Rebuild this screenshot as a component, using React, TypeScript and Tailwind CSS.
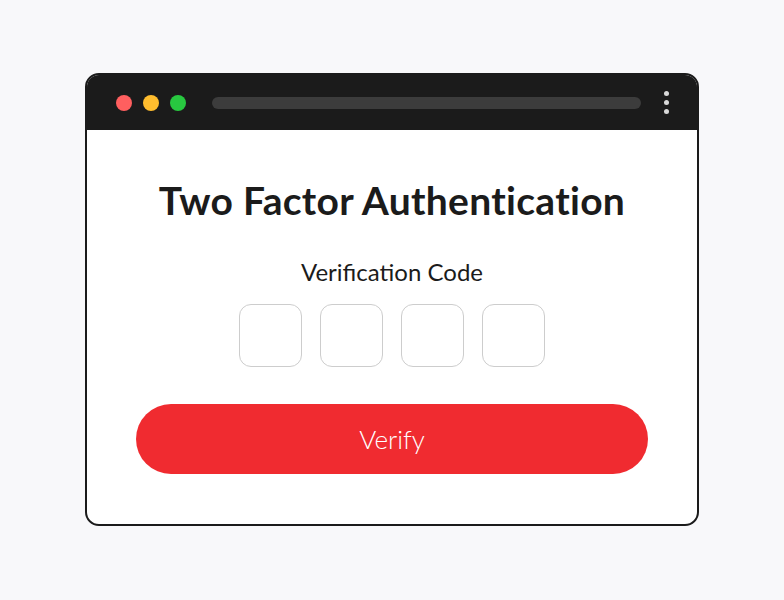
export default function App() {
  return (
    <div className="min-h-screen w-full bg-[#f8f8fa] pt-[73px] pl-[85px]" style={{ fontFamily: "Lato, 'Noto Sans', sans-serif" }}>
      {/* Browser window */}
      <div className="w-[614px] h-[453px] rounded-[14px] border-2 border-[#1b1b1b] bg-white overflow-hidden flex flex-col">
        {/* Title bar */}
        <div className="h-[55px] bg-[#1b1b1b] flex items-center pl-[29px] pr-[28px] shrink-0">
          <div className="flex items-center gap-[11px]">
            <span className="w-4 h-4 rounded-full bg-[#ff5f5f]" />
            <span className="w-4 h-4 rounded-full bg-[#ffbd2e]" />
            <span className="w-4 h-4 rounded-full bg-[#28c840]" />
          </div>
          <div className="ml-[26px] h-3 w-[429px] rounded-full bg-[#3c3c3c]" />
          <div className="ml-auto flex flex-col items-center gap-[4px]">
            <span className="w-[5px] h-[5px] rounded-full bg-[#d9d9d9]" />
            <span className="w-[5px] h-[5px] rounded-full bg-[#d9d9d9]" />
            <span className="w-[5px] h-[5px] rounded-full bg-[#d9d9d9]" />
          </div>
        </div>

        {/* Content */}
        <div className="flex flex-col items-center pt-[47px] px-[49px]">
          <h1 className="text-[39px] leading-[46px] font-bold text-[#1b1b1b] tracking-[0.3px]">Two Factor Authentication</h1>
          <p className="mt-[34px] text-[24px] leading-[30px] font-normal text-[#1b1b1b]">Verification Code</p>
          <div className="mt-[17px] flex gap-[18px]">
            {[0, 1, 2, 3].map((i) => (
              <input
                key={i}
                maxLength={1}
                className="w-[63px] h-[63px] rounded-[12px] border border-[#cdcdcd] bg-white text-center text-2xl outline-none"
              />
            ))}
          </div>
          <button className="mt-[37px] w-full h-[70px] rounded-full bg-[#f02b30] text-white text-[26px] font-light">
            Verify
          </button>
        </div>
      </div>
    </div>
  );
}
